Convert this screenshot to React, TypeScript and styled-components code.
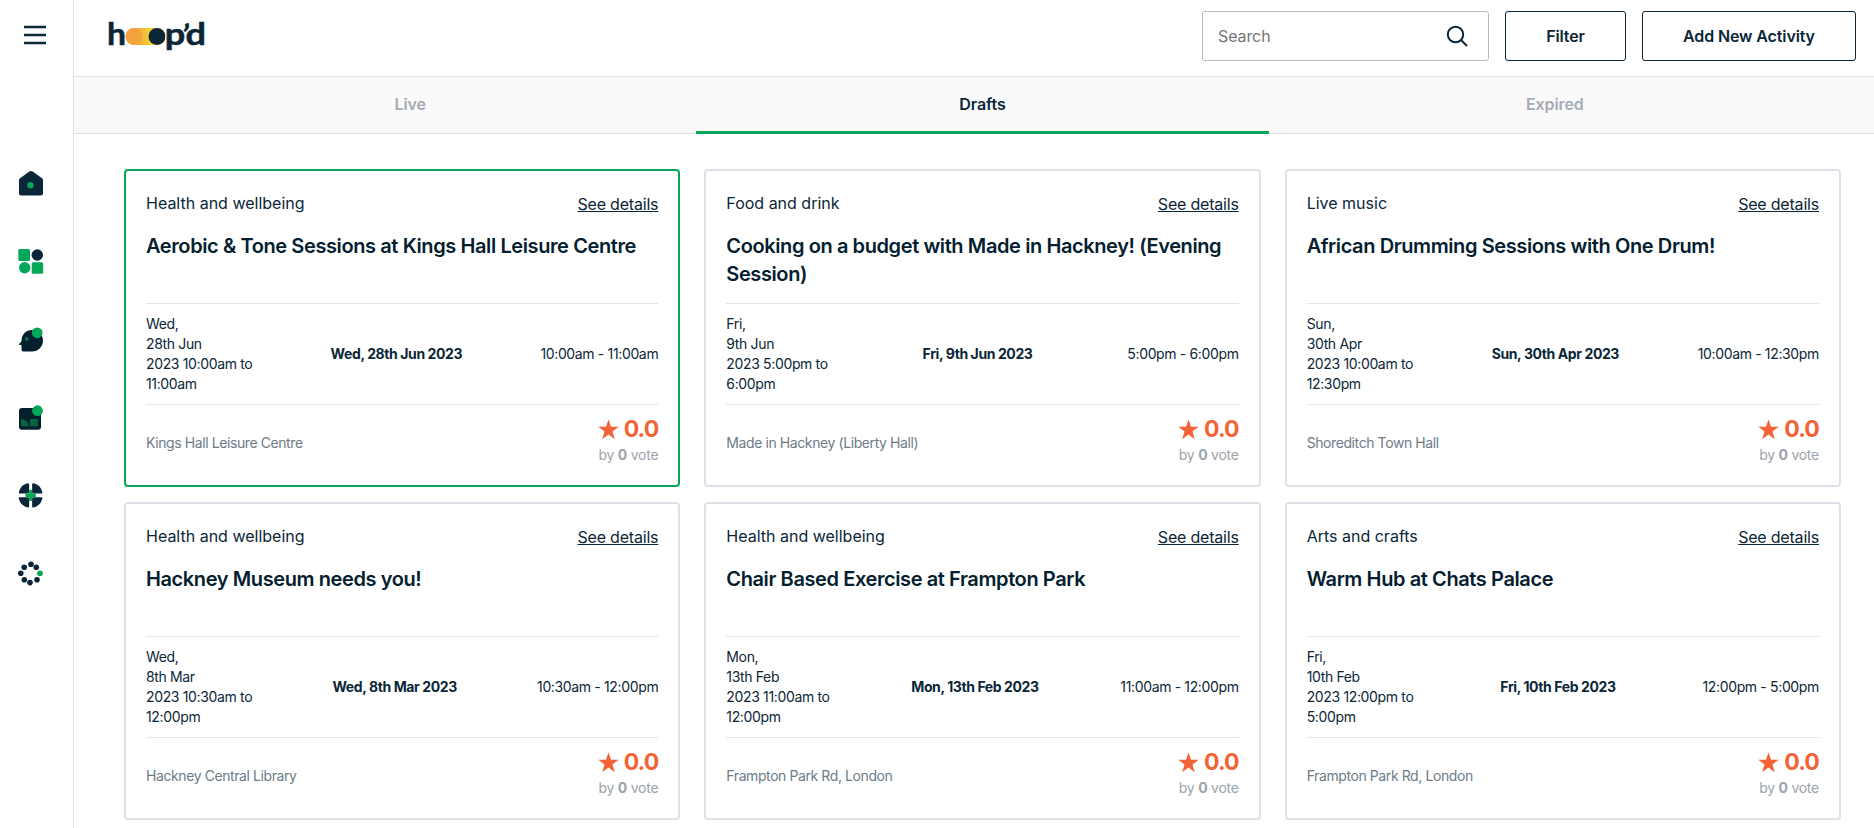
import React from "react";
import styled, { createGlobalStyle } from "styled-components";

const navy = "#0a2637";
const green = "#06a759";
const line = "#dee2e8";

const GlobalStyle = createGlobalStyle`
  *, *::before, *::after { box-sizing: border-box; }
  body {
    margin: 0;
    background: #fff;
    color: ${navy};
    font-family: Inter, "Liberation Sans", sans-serif;
    font-size: 16px;
    overflow: hidden;
  }
`;

const Shell = styled.div`
  display: flex;
  height: 828px;
`;

const Sidebar = styled.aside`
  flex: none;
  width: 74px;
  border-right: 1px solid ${line};
`;

const MenuButton = styled.button`
  display: block;
  width: 22px;
  height: 20px;
  margin: 25px 0 0 24px;
  padding: 0;
  border: 0;
  background: none;
`;

const Nav = styled.nav`
  display: flex;
  flex-direction: column;
  gap: 52px;
  margin: 125px 0 0 18px;
`;

const NavLink = styled.a`
  display: block;
  width: 26px;
  height: 26px;
`;

const Icon = styled.svg`
  display: block;
  overflow: visible;
`;

const Main = styled.main`
  flex: 1;
  min-width: 0;
`;

const Header = styled.header`
  display: flex;
  align-items: flex-start;
  justify-content: space-between;
  height: 77px;
  padding: 7px 18px 0 28px;
  border-bottom: 1px solid ${line};
`;

const Logo = styled.svg`
  display: block;
`;

const LogoText = styled.text`
  font-family: Lato, sans-serif;
  font-weight: 700;
  font-size: 31px;
  fill: ${navy};
  stroke: ${navy};
  stroke-width: 0.5px;
`;

const LogoTick = styled(LogoText)`
  font-style: italic;
  font-weight: 900;
  font-size: 29px;
`;

const Tools = styled.div`
  display: flex;
  gap: 16px;
  margin-top: 4px;
`;

const SearchBox = styled.label`
  display: flex;
  align-items: center;
  justify-content: space-between;
  width: 287px;
  height: 50px;
  padding: 0 20px 0 15px;
  border: 1px solid #b9bbbd;
  border-radius: 3px;
`;

const SearchInput = styled.input`
  width: 200px;
  padding: 0;
  border: 0;
  outline: 0;
  font: inherit;
  letter-spacing: -0.1px;
  color: ${navy};
  &::placeholder { color: #757575; opacity: 1; }
`;

const Button = styled.button<{ $width: number }>`
  width: ${(p) => p.$width}px;
  height: 50px;
  padding: 0;
  border: 1px solid ${navy};
  border-radius: 3px;
  background: #fff;
  color: ${navy};
  font: 600 16px/20px Inter, sans-serif;
  letter-spacing: -0.12px;
`;

const Tabs = styled.div`
  display: flex;
  height: 57px;
  padding: 0 33px 0 50px;
  background: #fafafa;
  box-shadow: inset 0 -1px #dddfe2;
`;

const Tab = styled.button<{ $active?: boolean }>`
  flex: 1;
  padding: 0 0 3px;
  border: 0;
  border-bottom: 3px solid ${(p) => (p.$active ? green : "transparent")};
  border-top: 3px solid transparent;
  background: none;
  color: ${(p) => (p.$active ? navy : "#a5abb5")};
  font: 600 16px/20px Inter, sans-serif;
  letter-spacing: -0.1px;
`;

const Grid = styled.section`
  display: grid;
  grid-template-columns: repeat(3, 1fr);
  gap: 15px 24px;
  padding: 35px 33px 0 50px;
`;

const Card = styled.article<{ $selected?: boolean }>`
  height: 318px;
  padding: 20px;
  border: 2px solid ${(p) => (p.$selected ? green : line)};
  border-radius: 4px;
`;

const CardTop = styled.div`
  display: flex;
  justify-content: space-between;
  height: 41px;
  line-height: 24px;
`;

const Category = styled.span``;

const Details = styled.a`
  margin-top: 1px;
  letter-spacing: -0.2px;
  text-decoration: underline;
`;

const Title = styled.h3`
  height: 71px;
  margin: 0;
  color: #04202f;
  font-size: 20px;
  font-weight: 600;
  line-height: 28px;
  letter-spacing: -0.4px;
`;

const Schedule = styled.div`
  display: flex;
  align-items: center;
  justify-content: space-between;
  height: 102px;
  border: 1px solid #dfe5e8;
  border-width: 1px 0;
  font-size: 14px;
  line-height: 20px;
  letter-spacing: -0.35px;
`;

const FullDate = styled.div`
  white-space: pre-line;
`;

const Day = styled.strong`
  font-weight: 700;
  letter-spacing: -0.4px;
`;

const CardFoot = styled.div`
  display: flex;
  align-items: center;
  justify-content: space-between;
  height: 75px;
`;

const Place = styled.span`
  color: #6c7c87;
  font-size: 14px;
  letter-spacing: -0.41px;
`;

const Rating = styled.div`
  display: flex;
  flex-direction: column;
  align-items: flex-end;
  margin-top: -4px;
`;

const Score = styled.div`
  display: flex;
  align-items: center;
  gap: 5px;
  height: 28px;
  padding-bottom: 2px;
  color: #f26336;
  font-size: 23px;
  font-weight: 700;
  line-height: 28px;
  letter-spacing: -0.9px;

  svg { margin-top: 2px; }
`;

const Votes = styled.div`
  color: #9ba3ad;
  font-size: 14px;
  line-height: 22px;
  letter-spacing: -0.25px;
  b { font-weight: 700; }
`;

const icons = [
  <>
    <path d="M11.3 1.6q1.7-1.2 3.4 0L24 8.2q1 .8 1 2v13q0 2.4-2.4 2.4H3.4Q1 25.600 1 23.200v-13q0-1.200 1-2z" fill={navy} />
    <circle cx="12.400" cy="15.300" r="3.200" fill={green} />
  </>,
  <>
    <rect x="0.300" y="1" width="11.700" height="12" rx="1.500" fill={green} />
    <circle cx="19.300" cy="7" r="5.700" fill={navy} />
    <circle cx="6.700" cy="19.700" r="5.700" fill={green} />
    <rect x="13.700" y="14.200" width="11.500" height="11.500" rx="1.500" fill={green} />
  </>,
  <>
    <path d="M3.500 15C3.500 8.500 8 4 14 4s11 4.500 11 10.500-4.500 11-11 11H5.500q-2 0-2-2v-4.500L1 18.700q-.5-.2 0-.8 2.300-2 2.500-2.900z" fill="#04202f" />
    <circle cx="8.700" cy="13" r="1.900" fill="#0b6d4c" />
    <circle cx="19.200" cy="6.800" r="5.400" fill={green} />
  </>,
  <>
    <rect x="1" y="4" width="22" height="21.800" rx="3" fill="#04202f" />
    <path d="M3 15q7 .5 8 7.300H4q-1 0-1-1z" fill="#08643f" />
    <rect x="12" y="15" width="8" height="7.300" rx="0.800" fill="#08643f" />
    <circle cx="19.500" cy="6.700" r="5.400" fill={green} />
  </>,
  <>
    <g fill={navy}>
      <path d="M9.500 1.300q1.600-.1 1.600 1.200v7.600q0 1.400-1.400 1.400H1.600q-1 0-.8-1.200Q2.600 3 9.500 1.300z" />
      <path d="M15.700 1.300q-1.600-.1-1.600 1.200v7.600q0 1.400 1.400 1.400h8.100q1 0 .8-1.200Q22.600 3 15.700 1.300z" />
      <path d="M9.500 25.500q1.600.1 1.600-1.200v-7.600q0-1.400-1.400-1.400H1.600q-1 0-.8 1.200Q2.600 23.800 9.500 25.500z" />
      <path d="M15.700 25.500q-1.600.1-1.600-1.200v-7.600q0-1.400 1.400-1.400h8.100q1 0 .8 1.200Q22.600 23.800 15.700 25.500z" />
    </g>
    <path d="M11.100 7.800h3v2.700q0 1 1 1h2.700v3.800h-2.700q-1 0-1 1v2.700h-3v-2.700q0-1-1-1H7.400v-3.800h2.700q1 0 1-1z" fill={green} />
  </>,
  <>
    {[[13, 4.300], [18.300, 7.300], [19, 19.700], [12, 22.600], [6.300, 19.700], [2.800, 13.300], [6.200, 7.300]].map(([x, y]) => (
      <circle key={x} cx={x} cy={y} r="2.800" fill={navy} />
    ))}
    <circle cx="22" cy="13.300" r="2.900" fill={green} />
  </>,
];

const activities = [
  { category: "Health and wellbeing", title: "Aerobic & Tone Sessions at Kings Hall Leisure Centre", full: "Wed,\n28th Jun\n2023 10:00am to\n11:00am", day: "Wed, 28th Jun 2023", time: "10:00am - 11:00am", place: "Kings Hall Leisure Centre" },
  { category: "Food and drink", title: "Cooking on a budget with Made in Hackney! (Evening Session)", full: "Fri,\n9th Jun\n2023 5:00pm to\n6:00pm", day: "Fri, 9th Jun 2023", time: "5:00pm - 6:00pm", place: "Made in Hackney (Liberty Hall)" },
  { category: "Live music", title: "African Drumming Sessions with One Drum!", full: "Sun,\n30th Apr\n2023 10:00am to\n12:30pm", day: "Sun, 30th Apr 2023", time: "10:00am - 12:30pm", place: "Shoreditch Town Hall" },
  { category: "Health and wellbeing", title: "Hackney Museum needs you!", full: "Wed,\n8th Mar\n2023 10:30am to\n12:00pm", day: "Wed, 8th Mar 2023", time: "10:30am - 12:00pm", place: "Hackney Central Library" },
  { category: "Health and wellbeing", title: "Chair Based Exercise at Frampton Park", full: "Mon,\n13th Feb\n2023 11:00am to\n12:00pm", day: "Mon, 13th Feb 2023", time: "11:00am - 12:00pm", place: "Frampton Park Rd, London" },
  { category: "Arts and crafts", title: "Warm Hub at Chats Palace", full: "Fri,\n10th Feb\n2023 12:00pm to\n5:00pm", day: "Fri, 10th Feb 2023", time: "12:00pm - 5:00pm", place: "Frampton Park Rd, London" },
];

export default function App() {
  return (
    <Shell>
      <GlobalStyle />
      <Sidebar>
        <MenuButton aria-label="Menu">
          <Icon width="22" height="20" viewBox="0 0 22 20">
            <path d="M0 2h22M0 10h22M0 18h22" stroke={navy} strokeWidth="2.600" />
          </Icon>
        </MenuButton>
        <Nav>
          {icons.map((icon, i) => (
            <NavLink key={i}>
              <Icon width="26" height="26" viewBox="0 0 26 26">{icon}</Icon>
            </NavLink>
          ))}
        </Nav>
      </Sidebar>
      <Main>
        <Header>
          <Logo width="110" height="50" viewBox="0 0 110 50">
            <defs>
              <linearGradient id="trail" x1="0" x2="1">
                <stop offset="0.350" stopColor="#f3b13c" />
                <stop offset="0.750" stopColor="#fbdc38" />
              </linearGradient>
            </defs>
            <LogoText x="5" y="38" textLength="19" lengthAdjust="spacingAndGlyphs">h</LogoText>
            <rect x="23.500" y="21" width="40" height="17" rx="8.500" fill="url(#trail)" />
            <circle cx="32" cy="29.500" r="8.500" fill="#f2a33c" />
            <circle cx="55" cy="29.500" r="8.500" fill={navy} />
            <rect x="63.400" y="21" width="2" height="17" fill="#fff" />
            <LogoText x="62.700" y="38" textLength="20.500" lengthAdjust="spacingAndGlyphs">p</LogoText>
            <LogoTick x="80.200" y="37.500">’</LogoTick>
            <LogoText x="83.600" y="38" textLength="20.500" lengthAdjust="spacingAndGlyphs">d</LogoText>
          </Logo>
          <Tools>
            <SearchBox>
              <SearchInput placeholder="Search" />
              <Icon width="22" height="22" viewBox="0 0 22 22" fill="none" stroke={navy} strokeWidth="2">
                <circle cx="9.500" cy="9.500" r="7.700" />
                <path d="m15 15 6 6" />
              </Icon>
            </SearchBox>
            <Button $width={121}>Filter</Button>
            <Button $width={214}>Add New Activity</Button>
          </Tools>
        </Header>
        <Tabs>
          <Tab>Live</Tab>
          <Tab $active>Drafts</Tab>
          <Tab>Expired</Tab>
        </Tabs>
        <Grid>
          {activities.map((a, i) => (
            <Card key={a.title} $selected={i === 0}>
              <CardTop>
                <Category>{a.category}</Category>
                <Details>See details</Details>
              </CardTop>
              <Title>{a.title}</Title>
              <Schedule>
                <FullDate>{a.full}</FullDate>
                <Day>{a.day}</Day>
                <span>{a.time}</span>
              </Schedule>
              <CardFoot>
                <Place>{a.place}</Place>
                <Rating>
                  <Score>
                    <Icon width="21" height="21" viewBox="0 0 21 20">
                      <path d="M10.500 0 13 7.300h7.700l-6.200 4.600 2.300 7.900-6.300-4.900-6.300 4.900 2.300-7.900L.3 7.300H8z" fill="#f26336" />
                    </Icon>
                    0.0
                  </Score>
                  <Votes>by <b>0</b> vote</Votes>
                </Rating>
              </CardFoot>
            </Card>
          ))}
        </Grid>
      </Main>
    </Shell>
  );
}
